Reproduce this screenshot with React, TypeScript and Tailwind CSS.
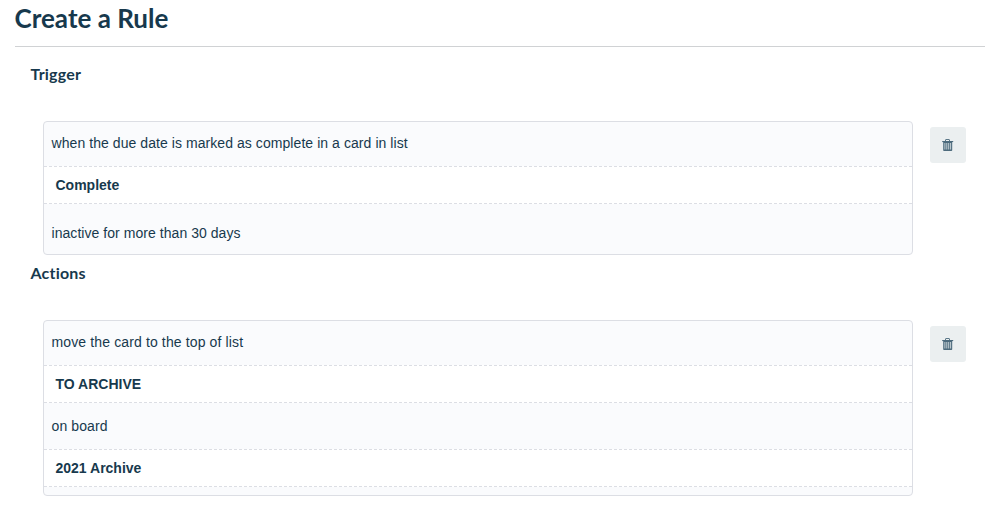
import type { ReactNode } from 'react';

interface SectionProps {
  title: string;
  children: ReactNode;
}

function TrashIcon() {
  return (
    <svg width="12" height="12" viewBox="0 0 12 12" fill="none" className="text-[#4d6b7d]">
      <path d="M3.5 2.2V1Q3.5 .5 4 .5H7Q7.5 .5 7.5 1V2.2" stroke="currentColor" strokeWidth=".9" />
      <path d="M.2 2H11.2V3.1H.2Z" fill="currentColor" />
      <path d="M1.2 3H10.2V11.2Q10.2 12 9.4 12H2Q1.2 12 1.2 11.2Z" fill="currentColor" />
      <path d="M2.9 4V10.5M4.8 4V10.5M6.7 4V10.5M8.6 4V10.5" stroke="#d3dbdf" strokeWidth=".9" />
    </svg>
  );
}

function Section({ title, children }: SectionProps) {
  return (
    <section>
      <h2 className="ml-[30.5px] h-6 text-base leading-6 font-bold tracking-[0.2px] font-[Lato,sans-serif] [font-variant-ligatures:none]">
        {title}
      </h2>
      <div className="mt-[35px] ml-[43px] flex items-start gap-[17px]">
        <div className="w-[870px] overflow-hidden rounded border border-[#dcdee4] bg-[#fafbfd]">{children}</div>
        <button aria-label="Remove" className="mt-1.5 flex size-9 items-center justify-center rounded-[3px] bg-[#ebeff0]">
          <TrashIcon />
        </button>
      </div>
    </section>
  );
}

function Field({ children }: { children: ReactNode }) {
  return (
    <div className="flex h-[38px] items-center border-y border-dashed border-[#dcdee4] bg-white px-[11.5px] font-bold">
      {children}
    </div>
  );
}

export default function App() {
  return (
    <main className="h-[513px] overflow-hidden bg-white font-['Liberation_Sans',Arial,sans-serif] text-sm text-[#17394d]">
      {/* Page title */}
      <header className="ml-[15px] h-[47px] border-b border-[#d0d2d4]">
        <h1 className="-ml-[0.5px] pt-[2px] text-[26px] leading-8 font-bold font-[Lato,sans-serif]">Create a Rule</h1>
      </header>

      <div className="flex flex-col gap-1.5 pt-[15px]">
        <Section title="Trigger">
          <div className="flex h-11 items-center px-[7.5px] pb-0.5 tracking-[0.065px]">
            when the due date is marked as complete in a card in list
          </div>
          <Field>Complete</Field>
          <div className="flex h-[50px] items-center px-[7.5px] pt-2 tracking-[0.05px]">inactive for more than 30 days</div>
        </Section>

        <Section title="Actions">
          <div className="flex h-11 items-center px-[7.5px] pb-0.5 tracking-[0.13px]">move the card to the top of list</div>
          <Field>TO ARCHIVE</Field>
          <div className="flex h-[46px] items-center px-[7.5px] tracking-[0.1px]">on board</div>
          <Field>2021 Archive</Field>
          <div className="h-2" />
        </Section>
      </div>
    </main>
  );
}
